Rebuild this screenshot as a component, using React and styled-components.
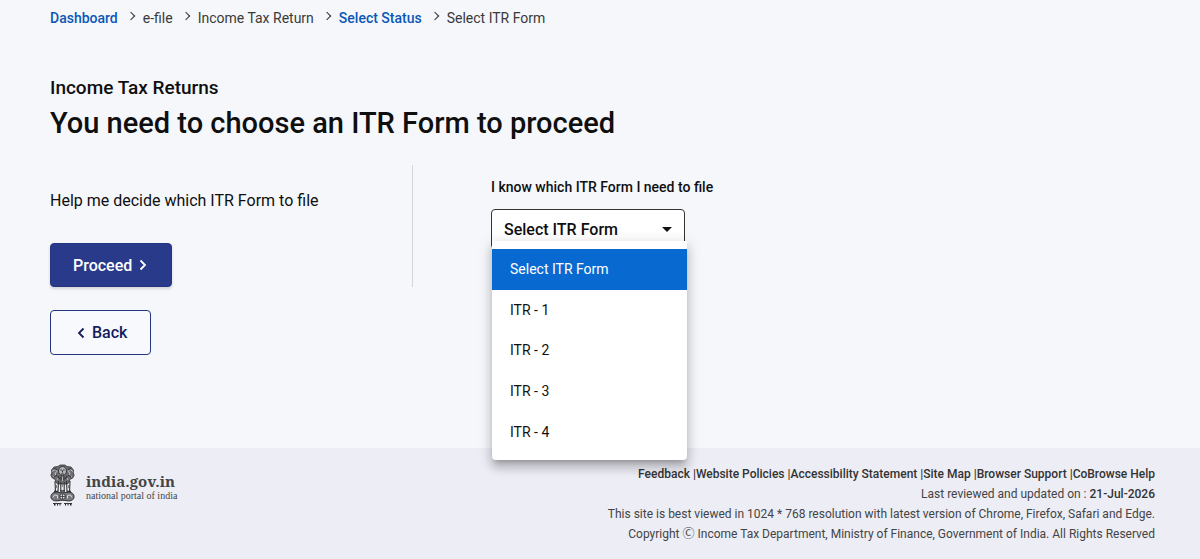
import React, { useState } from 'react';
import styled, { createGlobalStyle } from 'styled-components';

const GlobalStyle = createGlobalStyle`
  * {
    box-sizing: border-box;
  }

  body {
    margin: 0;
    background: #f5f7fb;
    color: #0f0f0f;
    font-family: Roboto, 'Liberation Sans', sans-serif;
    font-size: 16px;
  }

  button,
  select {
    font-family: inherit;
  }
`;

const Page = styled.div`
  display: flex;
  flex-direction: column;
  min-height: 100vh;
`;

const Main = styled.main`
  flex: 1;
  padding: 8px 50px 32px;
`;

const Breadcrumb = styled.ol`
  display: flex;
  align-items: center;
  margin: 0;
  padding: 0;
  list-style: none;
  font-size: 14px;
  line-height: 20px;
  color: #3a3a3a;
`;

const Crumb = styled.li`
  display: flex;
  align-items: center;

  & + &::before {
    content: '';
    width: 5px;
    height: 5px;
    margin: 0 9px 4px 10px;
    border-top: 1px solid #333;
    border-right: 1px solid #333;
    transform: rotate(45deg);
  }

  a {
    color: #0b57b7;
    font-weight: 500;
    text-decoration: none;
  }
`;

const Subtitle = styled.p`
  margin: 48px 0 0;
  font-size: 19px;
  font-weight: 500;
  line-height: 24px;
`;

const Title = styled.h1`
  margin: 5px 0 0;
  font-size: 29px;
  font-weight: 500;
  line-height: 36px;
`;

const Columns = styled.div`
  display: grid;
  grid-template-columns: 33% 1fr;
  margin-top: 24px;
`;

const HelpColumn = styled.section`
  height: 122px;
  padding-top: 26px;
  border-right: 1px solid #d3d5db;
`;

const HelpText = styled.p`
  margin: 0 0 32px;
  line-height: 20px;
`;

const FormColumn = styled.section`
  padding: 12px 0 0 78px;
`;

const ActionButton = styled.button`
  display: inline-flex;
  align-items: center;
  justify-content: center;
  gap: 7px;
  height: ${({ $primary }) => ($primary ? '44px' : '45px')};
  padding: 0 ${({ $primary }) => ($primary ? '24px' : '23px')} 0 ${({ $primary }) => ($primary ? '22px' : '26px')};
  border: 1px solid #253580;
  border-radius: 4px;
  background: ${({ $primary }) => ($primary ? '#293a8b' : '#f8f9fd')};
  box-shadow: ${({ $primary }) => ($primary ? '0 2px 3px rgba(0, 0, 0, 0.14)' : 'none')};
  color: ${({ $primary }) => ($primary ? '#fff' : '#141c5c')};
  font-size: 16px;
  font-weight: 500;
  cursor: pointer;
`;

const BackRow = styled.div`
  margin-top: 23px;
`;

const FieldLabel = styled.label`
  display: block;
  margin-bottom: 12px;
  font-size: 14px;
  font-weight: 500;
  line-height: 20px;
`;

const SelectWrap = styled.div`
  position: relative;
  width: 194px;

  > svg {
    position: absolute;
    top: 18px;
    right: 13px;
    pointer-events: none;
  }
`;

const Select = styled.select`
  display: block;
  width: 100%;
  height: 40px;
  padding: 0 32px 0 12px;
  appearance: none;
  border: 1px solid #333;
  border-radius: 4px;
  background: #fff;
  color: #0f0f0f;
  font-size: 16px;
  font-weight: 500;
`;

const Menu = styled.div`
  position: absolute;
  top: 32px;
  left: 1px;
  display: grid;
  grid-auto-rows: 1fr;
  width: 195px;
  height: 219px;
  padding: 8px 0;
  border-radius: 0 0 4px 4px;
  background: #fff;
  box-shadow: 0 5px 5px -3px rgba(0, 0, 0, 0.2), 0 8px 10px 1px rgba(0, 0, 0, 0.14),
    0 3px 14px 2px rgba(0, 0, 0, 0.12);
`;

const MenuOption = styled.button`
  padding: 0 18px;
  border: 0;
  background: ${({ $selected }) => ($selected ? '#086ad0' : '#fff')};
  color: ${({ $selected }) => ($selected ? '#fff' : '#111')};
  font-size: 14px;
  text-align: left;
  cursor: pointer;
`;

const Footer = styled.footer`
  display: flex;
  justify-content: space-between;
  align-items: flex-start;
  padding: 16px 45px 15px 50px;
  background: #ecedf5;
  color: #444;
`;

const Portal = styled.a`
  display: flex;
  align-items: center;
  gap: 11px;
  color: #444;
  font-family: 'Noto Serif', 'Liberation Serif', serif;
  text-decoration: none;
`;

const PortalText = styled.span`
  display: flex;
  flex-direction: column;
  padding-top: 4px;

  strong {
    font-size: 15px;
    line-height: 16px;
  }

  small {
    font-family: 'Liberation Serif', serif;
    font-size: 10px;
    line-height: 13px;
  }
`;

const Legal = styled.div`
  font-size: 12px;
  line-height: 20px;
  text-align: right;

  p {
    margin: 0;
  }

  strong {
    color: #333;
    font-weight: 500;
  }
`;

const CopyrightSign = styled.span`
  font-family: 'Noto Sans CJK JP', sans-serif;
  line-height: 1;
`;

const FooterLinks = styled.nav`
  color: #333;
  font-weight: 500;

  a {
    color: inherit;
    text-decoration: none;
  }
`;

const forms = ['Select ITR Form', 'ITR - 1', 'ITR - 2', 'ITR - 3', 'ITR - 4'];

const footerLinks = [
  'Feedback',
  'Website Policies',
  'Accessibility Statement',
  'Site Map',
  'Browser Support',
  'CoBrowse Help',
];

const Chevron = ({ left }) => (
  <svg width="8" height="12" viewBox="0 0 8 12" fill="none" stroke="currentColor" strokeWidth="1.8" aria-hidden="true">
    <path d={left ? 'M6.5 1.5 2 6l4.5 4.5' : 'M1.5 1.5 6 6l-4.5 4.5'} />
  </svg>
);

const Emblem = () => (
  <svg width="25" height="42" viewBox="0 0 25 42" fill="none" stroke="#333" aria-hidden="true">
    {/* manes and heads */}
    <path
      d="M8 2.5 10 1h5l2 1.5 4 .5 2.5 3-.3 3 1 2-1.500 3-3 1.500-.7 3-2 1.500H8l-2-1.500-.7-3-3-1.500L.8 11l1-2-.3-3L4 3z"
      fill="#6d6d72"
      strokeWidth="0.800"
    />
    <ellipse cx="12.500" cy="7" rx="4" ry="4.500" fill="#b4b5bd" strokeWidth="1" />
    <path d="M10.300 6h1.600M13.100 6h1.600M12.500 6.500v2M11 10h3" strokeWidth="1" />
    <path d="M2 7.500l3-2 2 2-2 1.500 1 3-3 .5M23 7.500l-3-2-2 2 2 1.500-1 3 3 .5" stroke="#c8c9d0" strokeWidth="0.900" />
    <path d="M4 4.500l3 1M21 4.500l-3 1M4 13l3-2M21 13l-3-2M8 12l1.500 3M17 12l-1.500 3M11 12.500v4M14 12.500v4" strokeWidth="1.200" />
    <path d="M7 16l1-2M18 16l-1-2M12.500 13v4" stroke="#c8c9d0" strokeWidth="0.800" />
    {/* chests and legs */}
    <path d="M5 17 5.500 28M8.500 17l-.5 10M10.800 18v9M14.200 18v9M16.500 17l.5 10M20 17l-.5 11" strokeWidth="1.100" />
    <path d="M6.500 21v3M12.500 20v3M18.500 21v3" stroke="#777" strokeWidth="0.900" />
    <path d="M4 27.500h4.500M10 27h5M16.500 27.500h4.500" strokeWidth="1.600" />
    {/* abacus with the wheel */}
    <path
      d="M4 28.500c3-.8 5 .2 8.500.2s5.500-1 8.500-.2c4 1.500 4 6.500.5 8-3 1-6-.2-9-.2s-6 1.200-9 .2c-3.500-1.500-3.500-6.500.5-8z"
      fill="#77777d"
      strokeWidth="1"
    />
    <circle cx="12.500" cy="32.500" r="2.900" fill="#d8d9e0" strokeWidth="1" />
    <path d="M12.500 30v5M10 32.500h5" strokeWidth="0.800" />
    <path d="M3 33.500l1.500-2.500 3 .5v3M22 33.500l-1.500-2.500-3 .5v3" stroke="#d8d9e0" strokeWidth="1" />
    {/* motto */}
    <path d="M3 39.500h8.500M14 39.500h8" stroke="#222" strokeWidth="0.900" />
    <path d="M4 40.700h1.500M7 40.700h1M9.500 40.700h1M15 40.700h1M17.500 40.700h1M20 40.700h1.500" stroke="#222" strokeWidth="1.400" />
  </svg>
);

const App = () => {
  const [form, setForm] = useState(forms[0]);
  const [open, setOpen] = useState(true);

  const pickForm = (name) => {
    setForm(name);
    setOpen(false);
  };

  return (
    <Page>
      <GlobalStyle />
      <Main>
        <nav aria-label="Breadcrumb">
          <Breadcrumb>
            <Crumb><a href="#dashboard">Dashboard</a></Crumb>
            <Crumb>e-file</Crumb>
            <Crumb>Income Tax Return</Crumb>
            <Crumb><a href="#status">Select Status</a></Crumb>
            <Crumb>Select ITR Form</Crumb>
          </Breadcrumb>
        </nav>

        <Subtitle>Income Tax Returns</Subtitle>
        <Title>You need to choose an ITR Form to proceed</Title>

        <Columns>
          <HelpColumn>
            <HelpText>Help me decide which ITR Form to file</HelpText>
            <ActionButton type="button" $primary>
              Proceed
              <Chevron />
            </ActionButton>
          </HelpColumn>
          <FormColumn>
            <FieldLabel htmlFor="itr-form">I know which ITR Form I need to file</FieldLabel>
            <SelectWrap>
              <Select id="itr-form" value={form} onChange={(e) => pickForm(e.target.value)}>
                {forms.map((name) => (
                  <option key={name}>{name}</option>
                ))}
              </Select>
              <svg width="10" height="5" viewBox="0 0 10 5" aria-hidden="true">
                <path d="M0 0h10L5 5z" fill="#111" />
              </svg>
              {open && (
                <Menu role="listbox" aria-label="ITR forms">
                  {forms.map((name) => (
                    <MenuOption
                      key={name}
                      type="button"
                      role="option"
                      aria-selected={name === form}
                      $selected={name === form}
                      onClick={() => pickForm(name)}
                    >
                      {name}
                    </MenuOption>
                  ))}
                </Menu>
              )}
            </SelectWrap>
          </FormColumn>
        </Columns>

        <BackRow>
          <ActionButton type="button">
            <Chevron left />
            Back
          </ActionButton>
        </BackRow>
      </Main>

      <Footer>
        <Portal href="#india">
          <Emblem />
          <PortalText>
            <strong>india.gov.in</strong>
            <small>national portal of india</small>
          </PortalText>
        </Portal>
        <Legal>
          <FooterLinks aria-label="Footer">
            {footerLinks.map((name, i) => (
              <React.Fragment key={name}>
                {i > 0 && ' |'}
                <a href="#footer">{name}</a>
              </React.Fragment>
            ))}
          </FooterLinks>
          <p>Last reviewed and updated on : <strong>21-Jul-2026</strong></p>
          <p>This site is best viewed in 1024 * 768 resolution with latest version of Chrome, Firefox, Safari and Edge.</p>
          <p>Copyright <CopyrightSign>Ⓒ</CopyrightSign> Income Tax Department, Ministry of Finance, Government of India. All Rights Reserved</p>
        </Legal>
      </Footer>
    </Page>
  );
};

export default App;
